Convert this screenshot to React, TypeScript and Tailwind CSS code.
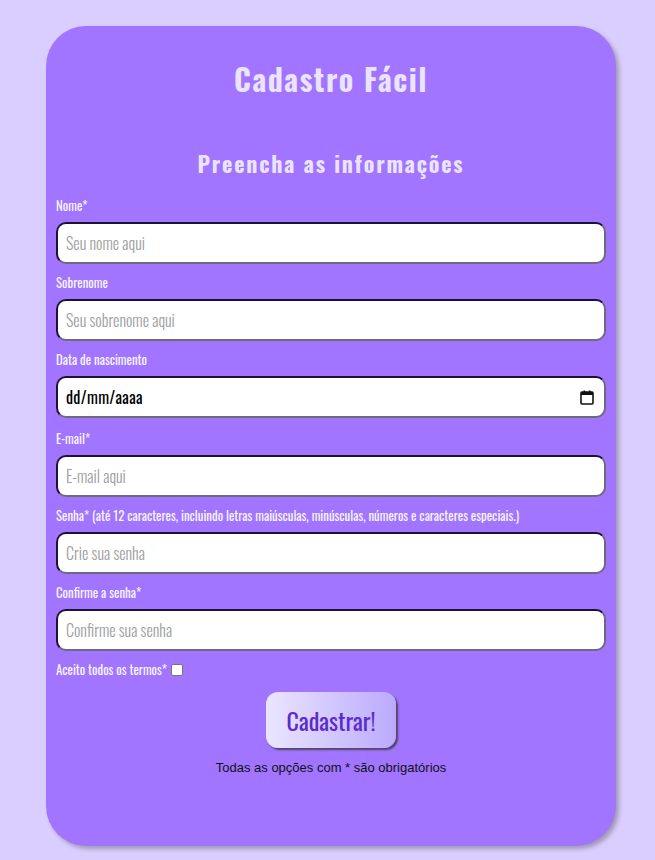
import React from "react";

const osw = "font-['Oswald','Liberation_Sans_Narrow','DejaVu_Sans_Condensed',sans-serif]";

const inputCls =
  "block w-full h-[42px] rounded-[10px] border-2 border-t-[#1d1233] border-l-[#1d1233] border-b-[#6f697d] border-r-[#6f697d] bg-white px-[8px] text-[16px] font-light text-black placeholder:text-[#a0a0a0] outline-none " +
  osw;

const labelCls = `block h-[20px] leading-[20px] text-[12.8px] font-normal text-[#f8f5ff] mb-[6px] ${osw}`;

function Field({ label, placeholder, type = "text", mb = "mb-[9px]" }: { label: string; placeholder: string; type?: string; mb?: string }) {
  return (
    <div className={mb}>
      <label className={labelCls}>{label}</label>
      <input type={type} placeholder={placeholder} className={inputCls} />
    </div>
  );
}

export default function App() {
  return (
    <div className="min-h-[860px] bg-[#dacdff] pt-[26px] pb-[14px]">
      <div className="ml-[46px] w-[570px] h-[820px] rounded-[40px] bg-[#a175ff] px-[10px] shadow-[3px_3px_4px_#a29bb3]">
        <h1 className={`pt-[29px] text-center text-[30px] leading-[48px] font-bold tracking-[1.5px] text-[#ebe4ff] ${osw}`}>
          Cadastro Fácil
        </h1>
        <h2 className={`mt-[42px] mb-[15px] text-center text-[22px] leading-[36px] font-bold tracking-[1.8px] text-[#ebe4ff] ${osw}`}>
          Preencha as informações
        </h2>
        <Field label="Nome*" placeholder="Seu nome aqui" />
        <Field label="Sobrenome" placeholder="Seu sobrenome aqui" />
        <div className="mb-[11px]">
          <label className={labelCls}>Data de nascimento</label>
          <div className={`flex items-center justify-between h-[42px] rounded-[10px] border-2 border-t-[#1d1233] border-l-[#1d1233] border-b-[#6f697d] border-r-[#6f697d] bg-white pl-[8px] pr-[10px] text-[16px] font-normal tracking-[0.3px] text-black ${osw}`}>
            <span>dd/mm/aaaa</span>
            <svg width="14" height="15" viewBox="0 0 14 15" fill="none">
              <rect x="1" y="2" width="12" height="12" rx="1" stroke="#111" strokeWidth="1.6" />
              <rect x="1" y="2" width="12" height="3" fill="#111" />
              <rect x="3.5" y="0.5" width="1.6" height="3" fill="#111" />
              <rect x="8.9" y="0.5" width="1.6" height="3" fill="#111" />
            </svg>
          </div>
        </div>
        <Field label="E-mail*" placeholder="E-mail aqui" type="email" />
        <Field
          label="Senha* (até 12 caracteres, incluindo letras maiúsculas, minúsculas, números e caracteres especiais.)"
          placeholder="Crie sua senha"
          type="password"
        />
        <Field label="Confirme a senha*" placeholder="Confirme sua senha" type="password" />
        <div className={`flex items-center h-[20px] text-[12.8px] font-normal text-[#f8f5ff] ${osw}`}>
          <span>Aceito todos os termos*</span>
          <span className="ml-[4px] inline-block w-[12px] h-[12px] rounded-[2px] bg-white border border-[#767676]"></span>
        </div>
        <div className="flex justify-center mt-[12px]">
          <button
            className={`w-[130px] h-[56px] rounded-[12px] bg-gradient-to-r from-[#ebe6ff] to-[#bca9ff] text-[#5a2ccd] text-[24px] shadow-[2px_2px_2px_#4d4660] ${osw}`}
          >
            Cadastrar!
          </button>
        </div>
        <p className="mt-[10px] text-center text-[13px] text-[#111] font-['Liberation_Sans',Arial,sans-serif]">
          Todas as opções com * são obrigatórios
        </p>
      </div>
    </div>
  );
}
